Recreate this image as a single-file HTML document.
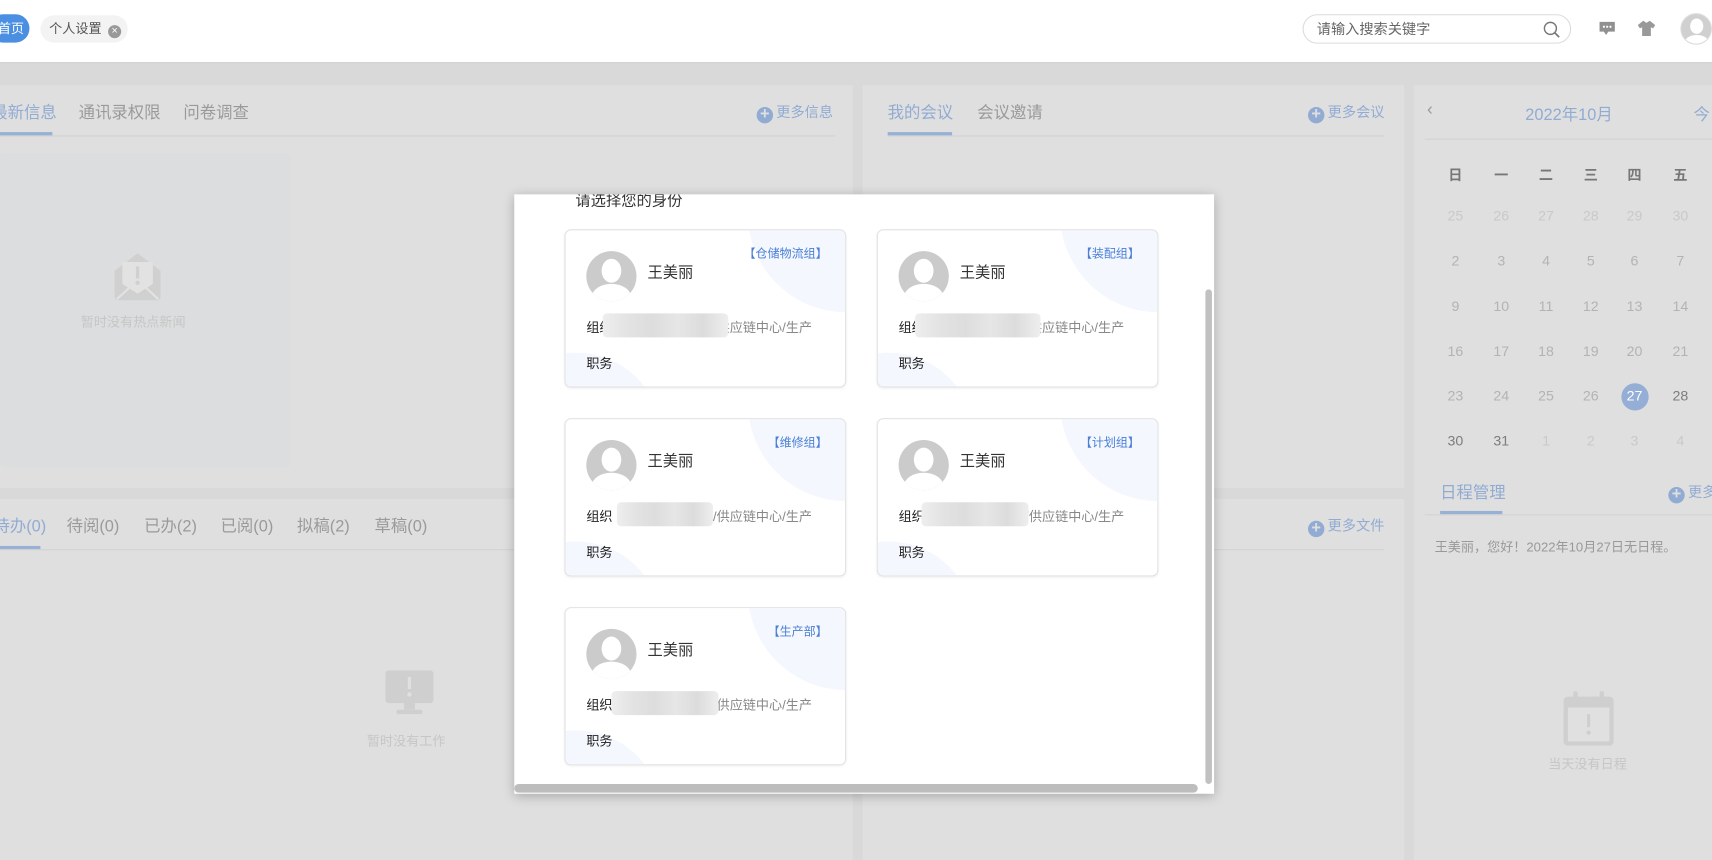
<!DOCTYPE html>
<html><head><meta charset="utf-8"><style>
*{box-sizing:border-box;margin:0;padding:0}
html,body{width:1712px;height:860px;overflow:hidden;background:#d9d9d9;font-family:"Liberation Sans","Noto Sans CJK SC",sans-serif}
#r{position:absolute;left:0;top:0;width:1568px;height:788px;transform:scale(1.09184);transform-origin:0 0;background:#d9d9d9;overflow:hidden}
.a{position:absolute;white-space:nowrap}
.hdr{left:0;top:0;width:1568px;height:58px;background:#fff;border-bottom:1px solid #c6c6c6}
.p{background:#dfdfdf}
.tab{font-size:15px;color:#9a9a9a}
.blue{color:#91abd3}
.ul{height:3px;background:#97b0d6}
.sep{height:1px;background:#d2d2d2}
.more{font-size:13px;color:#91abd3}
.more i{display:inline-block;width:15px;height:15px;border-radius:50%;background:#91abd3;color:#dfdfdf;font-style:normal;font-size:15px;line-height:14px;text-align:center;vertical-align:-2px;margin-right:3px;font-weight:bold}
.cal{font-size:13px;width:30px;text-align:center}
.card{position:absolute;width:258px;height:145px;border:1px solid #e2e2e2;border-radius:6px;background:#fff;overflow:hidden;box-shadow:0 1px 2px rgba(0,0,0,.05)}
.card .b1{position:absolute;left:167px;top:-105px;width:180px;height:180px;border-radius:50%;background:#f4f7fd}
.card .b2{position:absolute;left:-68px;top:112px;width:156px;height:156px;border-radius:50%;background:#f4f7fd}
.card .av{position:absolute;left:19px;top:19px;width:46px;height:46px;border-radius:50%;background:#cbcbcb;overflow:hidden}
.card .nm{position:absolute;left:75px;top:28px;font-size:14px;color:#333}
.card .tg{position:absolute;right:16px;top:13px;font-size:11px;color:#4a7fd6}
.card .org{position:absolute;left:19px;top:80px;font-size:12px;color:#222}
.card .org span{color:#888}
.card .blur{position:absolute;left:34px;top:76px;width:115px;height:22px;border-radius:4px;background:linear-gradient(90deg,#eee 0,#e3e3e3 20%,#ddd 40%,#e6e6e6 60%,#dcdcdc 80%,#eee 100%)}
.card .job{position:absolute;left:19px;top:113px;font-size:12px;color:#222}
</style></head><body><div id="r">
<div class="a hdr"></div>
<div class="a" style="left:-10px;top:13px;width:37px;height:26px;border-radius:13px;background:#4a8fe2;color:#fff;font-size:12px;line-height:26px;padding-left:8px">首页</div>
<div class="a" style="left:37px;top:14px;width:80px;height:25px;border-radius:13px;background:#f3f3f3;font-size:12px;color:#555;line-height:25px;padding-left:8px">个人设置<span style="display:inline-block;width:12px;height:12px;border-radius:50%;background:#999;color:#fff;font-size:10px;line-height:12px;text-align:center;margin-left:6px;vertical-align:-1px">×</span></div>
<div class="a" style="left:1193px;top:13px;width:246px;height:27px;border:1px solid #dcdcdc;border-radius:14px;font-size:13px;color:#666;line-height:25px;padding-left:12px">请输入搜索关键字
<svg style="position:absolute;right:9px;top:5px" width="16" height="16" viewBox="0 0 16 16"><circle cx="7" cy="7" r="5.5" fill="none" stroke="#777" stroke-width="1.3"/><path d="M11 11l4 4" stroke="#777" stroke-width="1.5"/></svg></div>
<svg class="a" style="left:1464px;top:19px" width="16" height="14" viewBox="0 0 16 14"><path d="M1 1h14v9H9l-2 3-2-3H1z" fill="#909090"/><circle cx="5" cy="5.5" r="1" fill="#fff"/><circle cx="8" cy="5.5" r="1" fill="#fff"/><circle cx="11" cy="5.5" r="1" fill="#fff"/></svg>
<svg class="a" style="left:1500px;top:18px" width="16" height="16" viewBox="0 0 16 16"><path d="M5 1l3 2 3-2 5 4-2 3-2-1v8H4V7L2 8 0 5z" fill="#999"/></svg>
<div class="a" style="left:1539px;top:12px;width:29px;height:29px;border-radius:50%;background:#d0d0d0;overflow:hidden;border:1px solid #ddd"><div style="position:absolute;left:8px;top:4px;width:12px;height:14px;border-radius:50%;background:#fff"></div><div style="position:absolute;left:3px;top:19px;width:22px;height:14px;border-radius:50%;background:#fff"></div></div>

<!-- panel A -->
<div class="a p" style="left:0;top:78px;width:781px;height:369px"></div>
<div class="a tab blue" style="left:-8px;top:92px">最新信息</div>
<div class="a tab" style="left:72px;top:92px">通讯录权限</div>
<div class="a tab" style="left:168px;top:92px">问卷调查</div>
<div class="a ul" style="left:0;top:121px;width:48px"></div>
<div class="a sep" style="left:0;top:124px;width:765px"></div>
<div class="a more" style="left:693px;top:92px"><i>+</i>更多信息</div>
<div class="a" style="left:0;top:140px;width:266px;height:288px;background:#dcddde;border-radius:4px"></div>
<svg class="a" style="left:103px;top:230px" width="46" height="46" viewBox="0 0 46 46"><path d="M2 18L23 2l21 16v24a3 3 0 0 1-3 3H5a3 3 0 0 1-3-3z" fill="#d0d0d0"/><path d="M9 10h28v20l-14 9-14-9z" fill="#e2e2e2"/><rect x="21.5" y="14" width="3" height="11" fill="#d0d0d0"/><circle cx="23" cy="29" r="2" fill="#d0d0d0"/><path d="M4 44l13-12M42 44L29 32" stroke="#e2e2e2" stroke-width="2"/></svg>
<div class="a" style="left:74px;top:286px;font-size:12px;color:#c6c6c6">暂时没有热点新闻</div>

<!-- panel B -->
<div class="a p" style="left:0;top:457px;width:781px;height:331px"></div>
<div class="a tab blue" style="left:-6px;top:471px">待办(0)</div>
<div class="a tab" style="left:61px;top:471px">待阅(0)</div>
<div class="a tab" style="left:132px;top:471px">已办(2)</div>
<div class="a tab" style="left:202px;top:471px">已阅(0)</div>
<div class="a tab" style="left:272px;top:471px">拟稿(2)</div>
<div class="a tab" style="left:343px;top:471px">草稿(0)</div>
<div class="a ul" style="left:0;top:500px;width:37px"></div>
<div class="a sep" style="left:0;top:503px;width:765px"></div>
<svg class="a" style="left:353px;top:614px" width="44" height="42" viewBox="0 0 44 42"><rect x="0" y="0" width="44" height="30" rx="3" fill="#cfcfcf"/><rect x="20.5" y="6" width="3" height="11" fill="#e0e0e0"/><circle cx="22" cy="22" r="2" fill="#e0e0e0"/><rect x="17" y="30" width="10" height="6" fill="#cfcfcf"/><rect x="10" y="36" width="24" height="4" rx="2" fill="#cfcfcf"/></svg>
<div class="a" style="left:336px;top:670px;font-size:12px;color:#c6c6c6">暂时没有工作</div>

<!-- panel C -->
<div class="a p" style="left:790px;top:78px;width:496px;height:369px"></div>
<div class="a tab blue" style="left:813px;top:92px">我的会议</div>
<div class="a tab" style="left:895px;top:92px">会议邀请</div>
<div class="a ul" style="left:813px;top:121px;width:59px"></div>
<div class="a sep" style="left:813px;top:124px;width:455px"></div>
<div class="a more" style="left:1198px;top:92px"><i>+</i>更多会议</div>

<!-- panel D -->
<div class="a p" style="left:790px;top:457px;width:496px;height:331px"></div>
<div class="a more" style="left:1198px;top:471px"><i>+</i>更多文件</div>
<div class="a sep" style="left:813px;top:503px;width:455px"></div>

<!-- panel E -->
<div class="a p" style="left:1295px;top:78px;width:280px;height:710px"></div>
<div class="a" style="left:1307px;top:92px;font-size:16px;color:#9a9a9a">‹</div>
<div class="a" style="left:1397px;top:94px;font-size:15px;color:#91abd3">2022年10月</div>
<div class="a" style="left:1551px;top:94px;font-size:15px;color:#91abd3">今</div>
<div class="a sep" style="left:1305px;top:127px;width:270px"></div>
<div class="a" style="left:1318px;top:150px;font-size:13px;color:#777;font-weight:bold">
<span class="a cal" style="left:0">日</span><span class="a cal" style="left:42px">一</span><span class="a cal" style="left:83px">二</span><span class="a cal" style="left:124px">三</span><span class="a cal" style="left:164px">四</span><span class="a cal" style="left:206px">五</span></div>
<div class="a" style="left:1318px;top:190px;color:#c9c9c9">
<span class="a cal" style="left:0">25</span><span class="a cal" style="left:42px">26</span><span class="a cal" style="left:83px">27</span><span class="a cal" style="left:124px">28</span><span class="a cal" style="left:164px">29</span><span class="a cal" style="left:206px">30</span></div>
<div class="a" style="left:1318px;top:231px;color:#b3b3b3">
<span class="a cal" style="left:0">2</span><span class="a cal" style="left:42px">3</span><span class="a cal" style="left:83px">4</span><span class="a cal" style="left:124px">5</span><span class="a cal" style="left:164px">6</span><span class="a cal" style="left:206px">7</span></div>
<div class="a" style="left:1318px;top:273px;color:#b3b3b3">
<span class="a cal" style="left:0">9</span><span class="a cal" style="left:42px">10</span><span class="a cal" style="left:83px">11</span><span class="a cal" style="left:124px">12</span><span class="a cal" style="left:164px">13</span><span class="a cal" style="left:206px">14</span></div>
<div class="a" style="left:1318px;top:314px;color:#b3b3b3">
<span class="a cal" style="left:0">16</span><span class="a cal" style="left:42px">17</span><span class="a cal" style="left:83px">18</span><span class="a cal" style="left:124px">19</span><span class="a cal" style="left:164px">20</span><span class="a cal" style="left:206px">21</span></div>
<div class="a" style="left:1485px;top:351px;width:25px;height:25px;border-radius:50%;background:#95aed5"></div>
<div class="a" style="left:1318px;top:355px;color:#b3b3b3">
<span class="a cal" style="left:0">23</span><span class="a cal" style="left:42px">24</span><span class="a cal" style="left:83px">25</span><span class="a cal" style="left:124px">26</span><span class="a cal" style="left:164px;color:#fff">27</span><span class="a cal" style="left:206px;color:#7c7c7c">28</span></div>
<div class="a" style="left:1318px;top:396px;color:#c9c9c9">
<span class="a cal" style="left:0;color:#7c7c7c">30</span><span class="a cal" style="left:42px;color:#7c7c7c">31</span><span class="a cal" style="left:83px">1</span><span class="a cal" style="left:124px">2</span><span class="a cal" style="left:164px">3</span><span class="a cal" style="left:206px">4</span></div>
<div class="a tab blue" style="left:1319px;top:440px">日程管理</div>
<div class="a ul" style="left:1319px;top:468px;width:57px"></div>
<div class="a sep" style="left:1305px;top:471px;width:270px"></div>
<div class="a more" style="left:1528px;top:440px"><i>+</i>更多</div>
<div class="a" style="left:1314px;top:492px;font-size:12px;color:#999">王美丽，您好！2022年10月27日无日程。</div>
<svg class="a" style="left:1432px;top:633px" width="46" height="50" viewBox="0 0 46 50"><rect x="0" y="5" width="46" height="45" rx="4" fill="#cfcfcf"/><rect x="9" y="0" width="4" height="10" rx="2" fill="#cfcfcf"/><rect x="33" y="0" width="4" height="10" rx="2" fill="#cfcfcf"/><rect x="4" y="15" width="38" height="31" fill="#e0e0e0"/><rect x="21.5" y="21" width="3" height="12" fill="#cfcfcf"/><circle cx="23" cy="38" r="2" fill="#cfcfcf"/></svg>
<div class="a" style="left:1418px;top:691px;font-size:12px;color:#c6c6c6">当天没有日程</div>

<!-- modal -->
<div class="a" style="left:471px;top:178px;width:641px;height:549px;background:#fff;box-shadow:0 2px 10px rgba(0,0,0,.25);overflow:hidden">
<div class="a" style="left:56px;top:-5px;font-size:14px;color:#333">请选择您的身份</div>
<div class="a" style="left:633px;top:87px;width:6px;height:453px;background:#c1c1c1;border-radius:3px"></div>
<div class="a" style="left:0;top:540px;width:626px;height:8px;background:#bdbdbd;border-radius:4px"></div>
</div>
<div id="cards"></div>
<div class="card" style="left:517px;top:210px"><div class="b1"></div><div class="b2"></div><div class="av"><div style="position:absolute;left:14px;top:7px;width:18px;height:22px;border-radius:50%;background:#fff"></div><div style="position:absolute;left:5px;top:30px;width:36px;height:24px;border-radius:50%;background:#fff"></div></div><div class="nm">王美丽</div><div class="tg">【仓储物流组】</div><div class="org">组织<span style="margin-left:92px">/供应链中心/生产</span></div><div class="blur"></div><div class="job">职务</div></div>
<div class="card" style="left:803px;top:210px"><div class="b1"></div><div class="b2"></div><div class="av"><div style="position:absolute;left:14px;top:7px;width:18px;height:22px;border-radius:50%;background:#fff"></div><div style="position:absolute;left:5px;top:30px;width:36px;height:24px;border-radius:50%;background:#fff"></div></div><div class="nm">王美丽</div><div class="tg">【装配组】</div><div class="org">组织<span style="margin-left:92px">/供应链中心/生产</span></div><div class="blur"></div><div class="job">职务</div></div>
<div class="card" style="left:517px;top:383px"><div class="b1"></div><div class="b2"></div><div class="av"><div style="position:absolute;left:14px;top:7px;width:18px;height:22px;border-radius:50%;background:#fff"></div><div style="position:absolute;left:5px;top:30px;width:36px;height:24px;border-radius:50%;background:#fff"></div></div><div class="nm">王美丽</div><div class="tg">【维修组】</div><div class="org">组织<span style="margin-left:92px">/供应链中心/生产</span></div><div class="blur" style="left:47px;width:88px"></div><div class="job">职务</div></div>
<div class="card" style="left:803px;top:383px"><div class="b1"></div><div class="b2"></div><div class="av"><div style="position:absolute;left:14px;top:7px;width:18px;height:22px;border-radius:50%;background:#fff"></div><div style="position:absolute;left:5px;top:30px;width:36px;height:24px;border-radius:50%;background:#fff"></div></div><div class="nm">王美丽</div><div class="tg">【计划组】</div><div class="org">组织<span style="margin-left:92px">/供应链中心/生产</span></div><div class="blur" style="left:40px;width:98px"></div><div class="job">职务</div></div>
<div class="card" style="left:517px;top:556px"><div class="b1"></div><div class="b2"></div><div class="av"><div style="position:absolute;left:14px;top:7px;width:18px;height:22px;border-radius:50%;background:#fff"></div><div style="position:absolute;left:5px;top:30px;width:36px;height:24px;border-radius:50%;background:#fff"></div></div><div class="nm">王美丽</div><div class="tg">【生产部】</div><div class="org">组织<span style="margin-left:92px">/供应链中心/生产</span></div><div class="blur" style="left:42px;width:98px"></div><div class="job">职务</div></div>
</div></body></html>
